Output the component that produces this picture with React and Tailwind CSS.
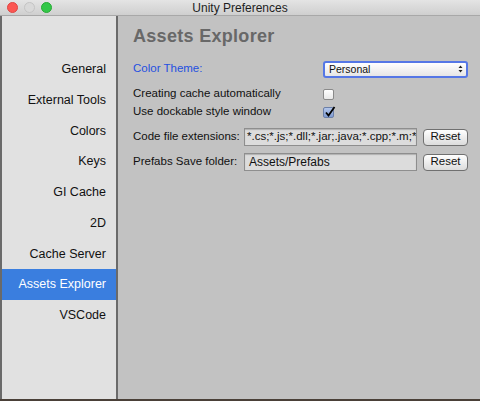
import React from 'react';

const items = ['General', 'External Tools', 'Colors', 'Keys', 'GI Cache', '2D', 'Cache Server', 'Assets Explorer', 'VSCode'];

const font = { fontFamily: '"Liberation Sans", Arial, sans-serif' };

const App = () => {
  return (
    <div className="w-[480px] h-[401px] flex flex-col bg-[#c2c2c2] overflow-hidden" style={font}>
      {/* title bar */}
      <div className="relative h-[16px] bg-gradient-to-b from-[#e4e4e4] to-[#cfcfcf] border-b border-[#a8a8a8] flex items-center justify-center">
        <div className="absolute left-[7px] top-[2px] flex gap-[6px]">
          <span className="w-[11px] h-[11px] rounded-full bg-[#fc5753] border border-[#df4744]" />
          <span className="w-[11px] h-[11px] rounded-full bg-[#d9d9d9] border border-[#c4c4c4]" />
          <span className="w-[11px] h-[11px] rounded-full bg-[#33c748] border border-[#27aa35]" />
        </div>
        <span className="text-[12px] leading-none text-[#1e1e1e]">Unity Preferences</span>
      </div>

      <div className="flex flex-1 border-b-2 border-[#4a4038]">
        {/* sidebar */}
        <div className="w-[118px] bg-[#e1e1e1] border-l-2 border-r-2 border-[#6a6a6a] pt-[38px] flex flex-col">
          {items.map((item) => (
            <div
              key={item}
              className={`h-[30.75px] shrink-0 flex items-center justify-end pr-[10px] text-[12.5px] ${
                item === 'Assets Explorer' ? 'bg-[#3a7edf] text-white' : 'text-[#111]'
              }`}
            >
              {item}
            </div>
          ))}
        </div>

        {/* main */}
        <div className="flex-1 pl-[15px] pt-[10px] flex flex-col text-[11.5px] text-[#111]">
          <div className="h-[20px] leading-[20px] text-[18px] font-bold text-[#686868] tracking-[0.3px]">Assets Explorer</div>

          <div className="mt-[14px] h-[18px] flex items-center">
            <span className="w-[190px] text-[#2450e0]">Color Theme:</span>
            <div className="w-[145px] h-[17px] rounded-[3px] border-2 border-[#5577e6] bg-gradient-to-b from-white to-[#e6e6e6] flex items-center justify-between pl-[4px] pr-[3px]">
              <span className="text-[10.5px] leading-none">Personal</span>
              <svg width="5" height="8" viewBox="0 0 5 8">
                <path d="M0.5 3 L2.5 0.5 L4.5 3 Z M0.5 5 L2.5 7.5 L4.5 5 Z" fill="#222" />
              </svg>
            </div>
          </div>

          <div className="mt-[7px] h-[18px] flex items-center">
            <span className="w-[190px]">Creating cache automatically</span>
            <span className="w-[11px] h-[11px] rounded-[2px] border border-[#8a8a8a] bg-gradient-to-b from-white to-[#e8e8e8]" />
          </div>

          <div className="h-[18px] flex items-center">
            <span className="w-[190px]">Use dockable style window</span>
            <span className="relative w-[11px] h-[11px] rounded-[2px] border border-[#6b7fa8] bg-gradient-to-b from-[#b3c6ea] to-[#7f9bd2]">
              <svg className="absolute -top-[2px] left-[0px]" width="12" height="12" viewBox="0 0 12 12">
                <path d="M2 6.5 L4.5 9.5 L10.5 1" stroke="#000" strokeWidth="1.8" fill="none" />
              </svg>
            </span>
          </div>

          <div className="mt-[6px] h-[20px] flex items-center">
            <span className="w-[111px]">Code file extensions:</span>
            <div className="w-[173px] h-[18px] bg-[#dcdcdc] border border-[#8e8e8e] shadow-[inset_0_1px_1px_rgba(0,0,0,0.2)] flex items-center pl-[2px] overflow-hidden whitespace-nowrap">
              *.cs;*.js;*.dll;*.jar;.java;*.cpp;*.m;*
            </div>
            <button className="ml-[6px] w-[45px] h-[17px] rounded-[4px] border border-[#707070] bg-gradient-to-b from-white to-[#dcdcdc] text-[11.5px] leading-none">Reset</button>
          </div>

          <div className="mt-[5px] h-[20px] flex items-center">
            <span className="w-[111px]">Prefabs Save folder:</span>
            <div className="w-[173px] h-[18px] bg-[#dcdcdc] border border-[#8e8e8e] shadow-[inset_0_1px_1px_rgba(0,0,0,0.2)] flex items-center pl-[4px] text-[12px]">
              Assets/Prefabs
            </div>
            <button className="ml-[6px] w-[45px] h-[17px] rounded-[4px] border border-[#707070] bg-gradient-to-b from-white to-[#dcdcdc] text-[11.5px] leading-none">Reset</button>
          </div>
        </div>
      </div>
    </div>
  );
};

export default App;
